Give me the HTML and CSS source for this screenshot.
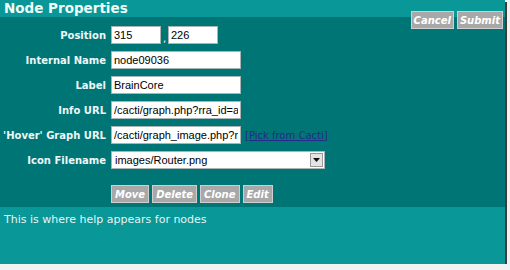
FILE: index.html
```html
<!DOCTYPE html>
<html lang="en">
<head>
    <meta charset="UTF-8">
    <title>Node Properties</title>
    <link rel="stylesheet" href="styles.css">
</head>
<body>
    <div class="panel">
        <div class="panel-header">
            <h1>Node Properties</h1>
            <div class="top-actions">
                <button class="btn btn-top">Cancel</button>
                <button class="btn btn-top">Submit</button>
            </div>
        </div>

        <div class="panel-body">
            <div class="form-grid">
                <label>Position</label>
                <div class="field-row">
                    <input type="text" class="input-small" value="315">
                    <span class="comma">,</span>
                    <input type="text" class="input-small" value="226">
                </div>

                <label>Internal Name</label>
                <div class="field-row">
                    <input type="text" class="input-text" value="node09036">
                </div>

                <label>Label</label>
                <div class="field-row">
                    <input type="text" class="input-text" value="BrainCore">
                </div>

                <label>Info URL</label>
                <div class="field-row">
                    <input type="text" class="input-text" value="/cacti/graph.php?rra_id=all&amp;local_graph_id=14">
                </div>

                <label>'Hover' Graph URL</label>
                <div class="field-row">
                    <input type="text" class="input-text" value="/cacti/graph_image.php?rra_id=0&amp;local_graph_id=14">
                    <a href="#" class="pick-link">[Pick from Cacti]</a>
                </div>

                <label>Icon Filename</label>
                <div class="field-row">
                    <div class="select-box">
                        <select>
                            <option>images/Router.png</option>
                            <option>images/Server.png</option>
                            <option>images/Switch.png</option>
                        </select>
                        <span class="select-arrow">
                            <svg width="7" height="4" viewBox="0 0 7 4"><path d="M0 0H7L3.5 4Z" fill="#111"/></svg>
                        </span>
                    </div>
                </div>
            </div>

            <div class="node-actions">
                <button class="btn">Move</button>
                <button class="btn">Delete</button>
                <button class="btn">Clone</button>
                <button class="btn">Edit</button>
            </div>
        </div>

        <div class="panel-help">
            This is where help appears for nodes
        </div>
    </div>
</body>
</html>
```

FILE: styles.css
```css
body {
    margin: 0;
    padding: 0;
    background-color: #f2f2f2;
    font-family: "DejaVu Sans", Verdana, sans-serif;
}
.panel {
    width: 505px;
    background-color: #007575;
    box-shadow: 2px 2px 0 #3c3c3c;
}
.panel-header {
    position: relative;
    height: 17px;
    background-color: #0a9797;
}
.panel-header h1 {
    margin: 0;
    padding: 0 0 0 4px;
    font-size: 13.5px;
    line-height: 17px;
    color: #effcf6;
}
.top-actions {
    position: absolute;
    top: 11px;
    right: 2px;
    display: flex;
    gap: 3px;
}
.btn {
    background-color: #a8a8a8;
    color: #fff;
    border: 1px solid #cfcfcf;
    font-family: "DejaVu Sans", Verdana, sans-serif;
    font-size: 10px;
    font-weight: bold;
    font-style: italic;
    height: 18px;
    padding: 0 3px;
    margin: 0;
    cursor: pointer;
}
.btn-top {
    padding: 0 2px;
}
.btn:hover {
    background-color: #999;
}
.panel-body {
    height: 190px;
    box-sizing: border-box;
    padding-top: 9px;
}
.form-grid {
    display: grid;
    grid-template-columns: 106px auto;
    column-gap: 5px;
    row-gap: 7px;
    align-items: center;
}
.form-grid label {
    text-align: right;
    font-size: 10px;
    font-weight: bold;
    color: #eef7f7;
}
.field-row {
    display: flex;
    align-items: center;
    height: 18px;
}
input[type="text"] {
    box-sizing: border-box;
    height: 18px;
    border: 1px solid #a9b4b4;
    padding: 0 2px;
    margin: 0;
    font-family: "Liberation Sans", Arial, sans-serif;
    font-size: 11px;
    color: #000;
    background-color: #fff;
    outline: none;
}
.input-small {
    width: 50px;
}
.comma {
    width: 7px;
    text-align: center;
    color: #eef7f7;
    font-size: 10px;
    align-self: flex-end;
}
.input-text {
    width: 130px;
}
.pick-link {
    margin-left: 4px;
    font-size: 10px;
    color: #232a8c;
}
.select-box {
    box-sizing: border-box;
    width: 214px;
    height: 18px;
    display: flex;
    align-items: center;
    background-color: #fff;
    border: 1px solid #a9b4b4;
}
.select-box select {
    flex: 1;
    appearance: none;
    -webkit-appearance: none;
    border: none;
    background: transparent;
    padding: 0 0 0 3px;
    font-family: "Liberation Sans", Arial, sans-serif;
    font-size: 11px;
    color: #000;
    outline: none;
}
.select-arrow {
    box-sizing: border-box;
    width: 13px;
    height: 14px;
    margin-right: 1px;
    display: flex;
    align-items: center;
    justify-content: center;
    background-color: #e4e4e4;
    border: 1px solid #9a9a9a;
}
.node-actions {
    display: flex;
    gap: 3px;
    margin: 16px 0 0 111px;
}
.panel-help {
    height: 57px;
    box-sizing: border-box;
    padding: 6px 4px;
    background-color: #0a9797;
    color: #e6f4f4;
    font-size: 11px;
}
```
